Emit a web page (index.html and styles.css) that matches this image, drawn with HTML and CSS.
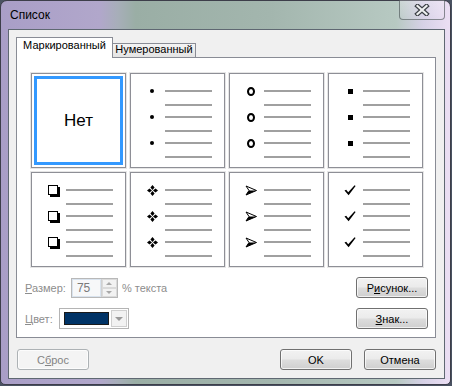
FILE: index.html
```html
<!DOCTYPE html>
<html lang="ru">

<head>
    <meta charset="UTF-8">
    <meta name="viewport" content="width=device-width, initial-scale=1.0">
    <title>Список</title>
    <link rel="stylesheet" href="styles.css">
</head>

<body>
    <div class="window">
        <div class="titlebar">
            <span class="title">Список</span>
            <div class="close-btn">
                <svg width="16" height="12" viewBox="0 0 16 12">
                    <path d="M3.5 2 L12.5 10 M12.5 2 L3.5 10" stroke="#3a3f44" stroke-width="4.5" stroke-linecap="square" />
                    <path d="M3.5 2 L12.5 10 M12.5 2 L3.5 10" stroke="#eef0f0" stroke-width="2.2" stroke-linecap="square" />
                </svg>
            </div>
        </div>

        <div class="client">
            <div class="tabs">
                <div class="tab active">Маркированный</div>
                <div class="tab">Нумерованный</div>
            </div>

            <div class="tab-panel">
                <div class="bullet-grid">
                    <div class="cell selected"><span class="none-label">Нет</span></div>

                    <div class="cell">
                        <div class="item"><span class="mark"><i class="dot"></i></span><span class="lines"><i></i><i></i></span></div>
                        <div class="item"><span class="mark"><i class="dot"></i></span><span class="lines"><i></i><i></i></span></div>
                        <div class="item"><span class="mark"><i class="dot"></i></span><span class="lines"><i></i><i></i></span></div>
                    </div>

                    <div class="cell">
                        <div class="item"><span class="mark"><i class="ring"></i></span><span class="lines"><i></i><i></i></span></div>
                        <div class="item"><span class="mark"><i class="ring"></i></span><span class="lines"><i></i><i></i></span></div>
                        <div class="item"><span class="mark"><i class="ring"></i></span><span class="lines"><i></i><i></i></span></div>
                    </div>

                    <div class="cell">
                        <div class="item"><span class="mark"><i class="square"></i></span><span class="lines"><i></i><i></i></span></div>
                        <div class="item"><span class="mark"><i class="square"></i></span><span class="lines"><i></i><i></i></span></div>
                        <div class="item"><span class="mark"><i class="square"></i></span><span class="lines"><i></i><i></i></span></div>
                    </div>

                    <div class="cell">
                        <div class="item"><span class="mark"><i class="box"></i></span><span class="lines"><i></i><i></i></span></div>
                        <div class="item"><span class="mark"><i class="box"></i></span><span class="lines"><i></i><i></i></span></div>
                        <div class="item"><span class="mark"><i class="box"></i></span><span class="lines"><i></i><i></i></span></div>
                    </div>

                    <div class="cell">
                        <div class="item"><span class="mark"><svg class="glyph" width="11" height="11" viewBox="0 0 11 11"><path d="M5.5 0 L7.6 2.5 L5.5 5 L3.4 2.5Z M5.5 6 L7.6 8.5 L5.5 11 L3.4 8.5Z M0 5.5 L2.5 3.4 L5 5.5 L2.5 7.6Z M6 5.5 L8.5 3.4 L11 5.5 L8.5 7.6Z" /></svg></span><span class="lines"><i></i><i></i></span></div>
                        <div class="item"><span class="mark"><svg class="glyph" width="11" height="11" viewBox="0 0 11 11"><path d="M5.5 0 L7.6 2.5 L5.5 5 L3.4 2.5Z M5.5 6 L7.6 8.5 L5.5 11 L3.4 8.5Z M0 5.5 L2.5 3.4 L5 5.5 L2.5 7.6Z M6 5.5 L8.5 3.4 L11 5.5 L8.5 7.6Z" /></svg></span><span class="lines"><i></i><i></i></span></div>
                        <div class="item"><span class="mark"><svg class="glyph" width="11" height="11" viewBox="0 0 11 11"><path d="M5.5 0 L7.6 2.5 L5.5 5 L3.4 2.5Z M5.5 6 L7.6 8.5 L5.5 11 L3.4 8.5Z M0 5.5 L2.5 3.4 L5 5.5 L2.5 7.6Z M6 5.5 L8.5 3.4 L11 5.5 L8.5 7.6Z" /></svg></span><span class="lines"><i></i><i></i></span></div>
                    </div>

                    <div class="cell">
                        <div class="item"><span class="mark"><svg width="12" height="11" viewBox="0 0 12 11"><path d="M1 1 L11.5 5.5 L1 10 L4 5.5Z" fill="#fff" stroke="#000" stroke-width="1" stroke-linejoin="miter" /><path d="M4 5.5 L11.5 5.5 L1 10Z" fill="#000" /></svg></span><span class="lines"><i></i><i></i></span></div>
                        <div class="item"><span class="mark"><svg width="12" height="11" viewBox="0 0 12 11"><path d="M1 1 L11.5 5.5 L1 10 L4 5.5Z" fill="#fff" stroke="#000" stroke-width="1" stroke-linejoin="miter" /><path d="M4 5.5 L11.5 5.5 L1 10Z" fill="#000" /></svg></span><span class="lines"><i></i><i></i></span></div>
                        <div class="item"><span class="mark"><svg width="12" height="11" viewBox="0 0 12 11"><path d="M1 1 L11.5 5.5 L1 10 L4 5.5Z" fill="#fff" stroke="#000" stroke-width="1" stroke-linejoin="miter" /><path d="M4 5.5 L11.5 5.5 L1 10Z" fill="#000" /></svg></span><span class="lines"><i></i><i></i></span></div>
                    </div>

                    <div class="cell">
                        <div class="item"><span class="mark"><svg class="glyph" width="12" height="11" viewBox="0 0 12 11"><path d="M0.5 5.5 L2.2 4.8 L4.2 7.2 L10.6 0.3 L11.6 0.9 L4.6 10.2Z" /></svg></span><span class="lines"><i></i><i></i></span></div>
                        <div class="item"><span class="mark"><svg class="glyph" width="12" height="11" viewBox="0 0 12 11"><path d="M0.5 5.5 L2.2 4.8 L4.2 7.2 L10.6 0.3 L11.6 0.9 L4.6 10.2Z" /></svg></span><span class="lines"><i></i><i></i></span></div>
                        <div class="item"><span class="mark"><svg class="glyph" width="12" height="11" viewBox="0 0 12 11"><path d="M0.5 5.5 L2.2 4.8 L4.2 7.2 L10.6 0.3 L11.6 0.9 L4.6 10.2Z" /></svg></span><span class="lines"><i></i><i></i></span></div>
                    </div>
                </div>

                <div class="opt-row">
                    <div class="field">
                        <span class="label disabled"><u>Р</u>азмер:</span>
                        <div class="spin">
                            <span class="spin-value">75</span>
                            <span class="spin-btns"><i class="up"></i><i class="down"></i></span>
                        </div>
                        <span class="disabled">% текста</span>
                    </div>
                    <button class="btn">Р<u>и</u>сунок...</button>
                </div>

                <div class="opt-row">
                    <div class="field">
                        <span class="label disabled"><u>Ц</u>вет:</span>
                        <div class="color-combo">
                            <span class="swatch"></span>
                            <span class="combo-arrow"></span>
                        </div>
                    </div>
                    <button class="btn"><u>З</u>нак...</button>
                </div>
            </div>

            <div class="footer">
                <button class="btn" disabled>С<u>б</u>рос</button>
                <div class="footer-right">
                    <button class="btn">OK</button>
                    <button class="btn">Отмена</button>
                </div>
            </div>
        </div>
    </div>
</body>

</html>
```

FILE: styles.css
```css
* {
    box-sizing: border-box;
    margin: 0;
    padding: 0;
}

body {
    width: 452px;
    height: 386px;
    background: #4a5262;
    font-family: "Liberation Sans", Arial, sans-serif;
    font-size: 11px;
    color: #000;
}

/* window frame */

.window {
    width: 451px;
    height: 385px;
    border: 1px solid #3d3e4a;
    border-radius: 7px 7px 5px 5px;
    padding: 0 5px 5px 7px;
    display: flex;
    flex-direction: column;
    background: linear-gradient(90deg, #a99ec7 0%, #b1a7cb 22%, #a7aeb9 26%, #9aaea5 30%, #a3b6ae 60%, #b7c9c2 88%, #d6d1e6 94%, #ecdff4 100%);
}

.titlebar {
    height: 28px;
    display: flex;
    justify-content: space-between;
    align-items: flex-start;
}

.title {
    font-size: 12px;
    margin: 7px 0 0 2px;
}

.close-btn {
    width: 46px;
    height: 20px;
    margin-top: -1px;
    border: 1px solid rgba(50, 60, 62, 0.55);
    border-top: none;
    border-radius: 0 0 4px 4px;
    background: linear-gradient(rgba(255, 255, 255, 0.25), rgba(255, 255, 255, 0.05));
    display: flex;
    align-items: center;
    justify-content: center;
}

.client {
    flex: 1;
    border: 1px solid #5f6872;
    background: #f0f0f0;
    padding: 7px 8px 8px 7px;
    display: flex;
    flex-direction: column;
}

/* tabs */

.tabs {
    display: flex;
    align-items: flex-end;
    height: 20px;
}

.tab {
    width: 83px;
    height: 14px;
    border: 1px solid #898c95;
    border-left: none;
    border-bottom: none;
    background: linear-gradient(#f4f4f4, #e4e4e4);
    text-align: center;
    line-height: 11px;
    white-space: nowrap;
}

.tab.active {
    width: 97px;
    height: 21px;
    margin-bottom: -1px;
    border-left: 1px solid #898c95;
    background: #fff;
    line-height: 15px;
    position: relative;
    z-index: 1;
}

.tab-panel {
    height: 281px;
    border: 1px solid #898c95;
    background: #fff;
    padding: 15px 7px 8px 8px;
}

/* bullet gallery */

.bullet-grid {
    display: grid;
    grid-template-columns: repeat(4, 95px);
    grid-auto-rows: 95px;
    gap: 4px;
    margin-left: 6px;
}

.cell {
    border: 1px solid #8e8f96;
    box-shadow: 0 0 0 1px #e6e6e6;
    padding: 16px 0 0 15px;
    display: flex;
    flex-direction: column;
    gap: 10px;
}

.cell.selected {
    padding: 0;
    align-items: center;
    justify-content: center;
    box-shadow: 0 0 0 1px #e6e6e6, inset 0 0 0 2px #fff, inset 0 0 0 5px #3399ff;
}

.none-label {
    font-size: 17px;
}

.item {
    display: flex;
    align-items: flex-start;
}

.mark {
    width: 12px;
    height: 2px;
    margin-right: 7px;
    display: flex;
    align-items: center;
    justify-content: center;
}

.mark svg {
    flex: none;
}

.glyph {
    fill: #000;
}

.lines {
    width: 47px;
    display: flex;
    flex-direction: column;
    gap: 12px;
}

.lines i {
    display: block;
    height: 2px;
    background: #a0a0a0;
}

.dot {
    flex: none;
    width: 4px;
    height: 4px;
    border-radius: 50%;
    background: #000;
}

.ring {
    flex: none;
    width: 8px;
    height: 9px;
    border: 2px solid #000;
    border-radius: 50%;
}

.square {
    flex: none;
    width: 5px;
    height: 5px;
    background: #000;
}

.box {
    flex: none;
    width: 10px;
    height: 10px;
    border: 1px solid #000;
    box-shadow: 2px 2px 0 #000;
    background: #fff;
}

/* options */

.opt-row {
    display: flex;
    justify-content: space-between;
    align-items: center;
    height: 21px;
    margin-top: 10px;
}

.field {
    display: flex;
    align-items: center;
}

.disabled {
    color: #8d8d8d;
}

.label {
    margin-right: 5px;
}

.spin {
    display: flex;
    height: 20px;
    border: 1px solid #b8b8b8;
    margin-right: 4px;
}

.spin-value {
    width: 29px;
    border: 1px solid #d9e3ee;
    background: #f7f8f9;
    color: #7a7a7a;
    padding-left: 4px;
    line-height: 16px;
    font-size: 12px;
}

.spin-btns {
    width: 16px;
    display: flex;
    flex-direction: column;
    border-left: 1px solid #d0d0d0;
    background: #f2f2f2;
}

.spin-btns i {
    flex: 1;
    display: flex;
    align-items: center;
    justify-content: center;
    border: 1px solid #dadada;
}

.spin-btns .up::after {
    content: "";
    border: 3px solid transparent;
    border-bottom: 3px solid #a8a8a8;
    border-top: none;
}

.spin-btns .down::after {
    content: "";
    border: 3px solid transparent;
    border-top: 3px solid #a8a8a8;
    border-bottom: none;
}

.color-combo {
    width: 70px;
    height: 21px;
    margin-left: 1px;
    border: 1px solid #b4b4b4;
    background: #fff;
    display: flex;
    align-items: stretch;
    padding: 1px 1px 1px 4px;
    gap: 2px;
}

.swatch {
    width: 45px;
    margin: 2px 0;
    background: #003366;
    border: 1px solid #1a1a1a;
}

.combo-arrow {
    flex: 1;
    border: 1px solid #cfcfcf;
    background: #f2f2f2;
    display: flex;
    align-items: center;
    justify-content: center;
}

.combo-arrow::after {
    content: "";
    border: 4px solid transparent;
    border-top: 4px solid #9a9a9a;
    border-bottom: none;
}

/* buttons */

.btn {
    width: 72px;
    height: 21px;
    border: 1px solid #707070;
    border-radius: 3px;
    background: linear-gradient(#f2f2f2 0%, #ebebeb 48%, #dddddd 52%, #cfcfcf 100%);
    box-shadow: inset 0 0 0 1px rgba(255, 255, 255, 0.7);
    font-family: "Liberation Sans", Arial, sans-serif;
    font-size: 11px;
    color: #000;
}

.btn:disabled {
    border-color: #adb2b5;
    background: #f4f4f4;
    color: #838383;
}

.footer {
    display: flex;
    justify-content: space-between;
    margin-top: 11px;
    padding-left: 1px;
}

.footer-right {
    display: flex;
    gap: 12px;
}
```
